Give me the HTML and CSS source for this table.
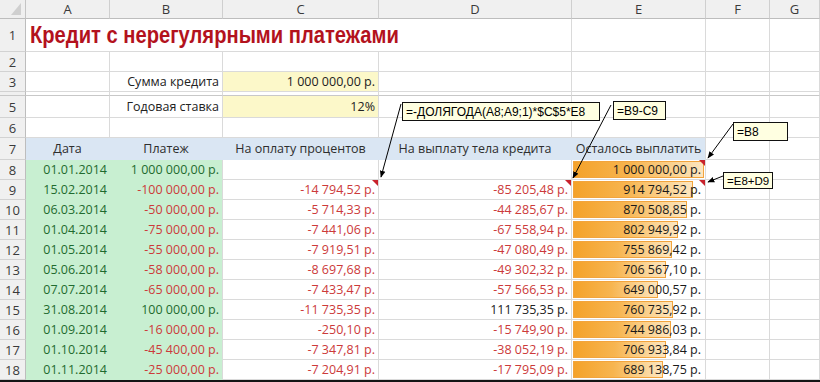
FILE: index.html
```html
<!DOCTYPE html>
<html lang="ru">
<head>
<meta charset="utf-8">
<title>Кредит с нерегулярными платежами</title>
<link rel="stylesheet" href="styles.css">
</head>
<body>
<div class="sheet">
  <div class="c corner"><svg width="10" height="12" viewBox="0 0 10 12"><polygon points="10,0 10,12 0,12" fill="#cfcfcf"/></svg></div>
  <div class="c ch">A</div><div class="c ch">B</div><div class="c ch">C</div><div class="c ch">D</div><div class="c ch">E</div><div class="c ch">F</div><div class="c ch">G</div>

  <div class="c rh">1</div>
  <div class="c title"><span class="title-text">Кредит с нерегулярными платежами</span></div>
  <div class="c"></div><div class="c"></div><div class="c"></div>

  <div class="c rh">2</div>
  <div class="c"></div><div class="c"></div><div class="c"></div><div class="c"></div><div class="c"></div><div class="c"></div><div class="c"></div>

  <div class="c rh">3</div>
  <div class="c"></div><div class="c r">Сумма кредита</div><div class="c r yel">1 000 000,00 р.</div><div class="c"></div><div class="c"></div><div class="c"></div><div class="c"></div>

  <div class="c rh thin"></div>
  <div class="c thin"></div><div class="c thin"></div><div class="c thin"></div><div class="c thin"></div><div class="c thin"></div><div class="c thin"></div><div class="c thin"></div>

  <div class="c rh">5</div>
  <div class="c"></div><div class="c r">Годовая ставка</div><div class="c r yel">12%</div><div class="c"></div><div class="c"></div><div class="c"></div><div class="c"></div>

  <div class="c rh">6</div>
  <div class="c"></div><div class="c"></div><div class="c"></div><div class="c"></div><div class="c"></div><div class="c"></div><div class="c"></div>

  <div class="c rh">7</div>
  <div class="c th">Дата</div><div class="c th">Платеж</div><div class="c th">На оплату процентов</div><div class="c th">На выплату тела кредита</div><div class="c th last">Осталось выплатить</div><div class="c"></div><div class="c"></div>

  <div class="c rh">8</div>
  <div class="c gr ga r date">01.01.2014</div><div class="c gr r pos">1 000 000,00 р.</div><div class="c r"></div><div class="c r"></div>
  <div class="c e note"><span class="bar" style="width:131px"></span><span class="v">1 000 000,00 р.</span></div><div class="c"></div><div class="c"></div>

  <div class="c rh">9</div>
  <div class="c gr ga r date">15.02.2014</div><div class="c gr r neg">-100 000,00 р.</div><div class="c r neg note">-14 794,52 р.</div><div class="c r neg note">-85 205,48 р.</div>
  <div class="c e note"><span class="bar" style="width:119.8px"></span><span class="v">914 794,52 р.</span></div><div class="c"></div><div class="c"></div>

  <div class="c rh">10</div>
  <div class="c gr ga r date">06.03.2014</div><div class="c gr r neg">-50 000,00 р.</div><div class="c r neg">-5 714,33 р.</div><div class="c r neg">-44 285,67 р.</div>
  <div class="c e"><span class="bar" style="width:114px"></span><span class="v">870 508,85 р.</span></div><div class="c"></div><div class="c"></div>

  <div class="c rh">11</div>
  <div class="c gr ga r date">01.04.2014</div><div class="c gr r neg">-75 000,00 р.</div><div class="c r neg">-7 441,06 р.</div><div class="c r neg">-67 558,94 р.</div>
  <div class="c e"><span class="bar" style="width:105.2px"></span><span class="v">802 949,92 р.</span></div><div class="c"></div><div class="c"></div>

  <div class="c rh">12</div>
  <div class="c gr ga r date">01.05.2014</div><div class="c gr r neg">-55 000,00 р.</div><div class="c r neg">-7 919,51 р.</div><div class="c r neg">-47 080,49 р.</div>
  <div class="c e"><span class="bar" style="width:99px"></span><span class="v">755 869,42 р.</span></div><div class="c"></div><div class="c"></div>

  <div class="c rh">13</div>
  <div class="c gr ga r date">05.06.2014</div><div class="c gr r neg">-58 000,00 р.</div><div class="c r neg">-8 697,68 р.</div><div class="c r neg">-49 302,32 р.</div>
  <div class="c e"><span class="bar" style="width:92.6px"></span><span class="v">706 567,10 р.</span></div><div class="c"></div><div class="c"></div>

  <div class="c rh">14</div>
  <div class="c gr ga r date">07.07.2014</div><div class="c gr r neg">-65 000,00 р.</div><div class="c r neg">-7 433,47 р.</div><div class="c r neg">-57 566,53 р.</div>
  <div class="c e"><span class="bar" style="width:85px"></span><span class="v">649 000,57 р.</span></div><div class="c"></div><div class="c"></div>

  <div class="c rh">15</div>
  <div class="c gr ga r date">31.08.2014</div><div class="c gr r pos">100 000,00 р.</div><div class="c r neg">-11 735,35 р.</div><div class="c r">111 735,35 р.</div>
  <div class="c e"><span class="bar" style="width:99.7px"></span><span class="v">760 735,92 р.</span></div><div class="c"></div><div class="c"></div>

  <div class="c rh">16</div>
  <div class="c gr ga r date">01.09.2014</div><div class="c gr r neg">-16 000,00 р.</div><div class="c r neg">-250,10 р.</div><div class="c r neg">-15 749,90 р.</div>
  <div class="c e"><span class="bar" style="width:97.6px"></span><span class="v">744 986,03 р.</span></div><div class="c"></div><div class="c"></div>

  <div class="c rh">17</div>
  <div class="c gr ga r date">01.10.2014</div><div class="c gr r neg">-45 400,00 р.</div><div class="c r neg">-7 347,81 р.</div><div class="c r neg">-38 052,19 р.</div>
  <div class="c e"><span class="bar" style="width:92.6px"></span><span class="v">706 933,84 р.</span></div><div class="c"></div><div class="c"></div>

  <div class="c rh">18</div>
  <div class="c gr ga r date">01.11.2014</div><div class="c gr r neg">-25 000,00 р.</div><div class="c r neg">-7 204,91 р.</div><div class="c r neg">-17 795,09 р.</div>
  <div class="c e"><span class="bar" style="width:90.3px"></span><span class="v">689 138,75 р.</span></div><div class="c"></div><div class="c"></div>

  <svg class="arrows" width="820" height="382" viewBox="0 0 820 382">
    <defs>
      <marker id="ah" viewBox="0 0 10 10" refX="9" refY="5" markerWidth="7" markerHeight="7" orient="auto">
        <path d="M0,1 L10,5 L0,9 z" fill="#000"/>
      </marker>
    </defs>
    <line x1="401" y1="104" x2="381" y2="177" stroke="#000" stroke-width="1" marker-end="url(#ah)"/>
    <line x1="611" y1="105" x2="573" y2="178" stroke="#000" stroke-width="1" marker-end="url(#ah)"/>
    <line x1="733" y1="124" x2="708" y2="158" stroke="#000" stroke-width="1" marker-end="url(#ah)"/>
    <line x1="723" y1="176" x2="708" y2="182" stroke="#000" stroke-width="1" marker-end="url(#ah)"/>
  </svg>
  <div class="cm cm1">=-ДОЛЯГОДА(A8;A9;1)*$C$5*E8</div>
  <div class="cm cm2">=B9-C9</div>
  <div class="cm cm3">=B8</div>
  <div class="cm cm4">=E8+D9</div>
</div>
</body>
</html>
```

FILE: styles.css
```css
html, body {
  margin: 0;
  padding: 0;
  background: #ffffff;
}

.sheet {
  position: relative;
  width: 820px;
  display: grid;
  grid-template-columns: 26px 84px 113px 156px 193px 134px 64px 50px;
  grid-template-rows: 19px 33px 20px 20px 4px 22px 20px 22px repeat(11, 20px);
  border-bottom: 2px solid #141414;
  font-family: "Open Sans", "DejaVu Sans", sans-serif;
  font-size: 12.5px;
  color: #222222;
}

.c {
  box-sizing: border-box;
  position: relative;
  display: flex;
  align-items: center;
  min-width: 0;
  padding: 0 3px;
  white-space: nowrap;
  border-right: 1px solid #dadada;
  border-bottom: 1px solid #dadada;
}

.corner {
  background: #efefef;
  justify-content: flex-end;
  align-items: flex-end;
  padding: 0 4px 3px 0;
  border-right-color: #c4c4c4;
  border-bottom-color: #bdbdbd;
}

.ch {
  background: #f0f0f0;
  justify-content: center;
  color: #3a3a3a;
  font-size: 13px;
  border-right-color: #cfcfcf;
  border-bottom-color: #bdbdbd;
}

.rh {
  background: #f0f0f0;
  justify-content: center;
  padding: 0;
  color: #3a3a3a;
  font-size: 13px;
  border-right-color: #bdbdbd;
  border-bottom-color: #d2d2d2;
}

.thin {
  border-bottom: 1px solid #c8c8c8;
}

.r {
  justify-content: flex-end;
}

.ctr {
  justify-content: center;
}

.title {
  grid-column: span 4;
  padding-left: 4px;
  color: #b3121d;
}

.title-text {
  display: inline-block;
  font-family: "Liberation Sans", Arial, sans-serif;
  font-weight: bold;
  font-size: 24px;
  transform: scaleX(0.84);
  transform-origin: left center;
}

.yel {
  background: #fcf8c9;
}

.th {
  background: #dae6f3;
  justify-content: center;
  color: #2e2e2e;
  border-right-color: transparent;
  border-bottom-color: transparent;
}

.th.last {
  border-right-color: #dadada;
}

.gr {
  background: #c8efd1;
  border-bottom-color: transparent;
}

.gr.ga {
  border-right-color: transparent;
}

.date {
  color: #1f6b2f;
  padding-right: 2px;
}

.pos {
  color: #1f6b2f;
}

.neg {
  color: #cc3a3a;
}

.e {
  justify-content: flex-end;
  padding-right: 4px;
  color: #1a1a1a;
}

.bar {
  position: absolute;
  left: 1px;
  top: 1px;
  height: 17px;
  box-sizing: border-box;
  border: 1px solid #f2a43c;
  background: linear-gradient(90deg, #f4a22a 0%, #f7b550 45%, #fbd597 80%, #fde6c0 100%);
}

.v {
  position: relative;
}

.note::after {
  content: "";
  position: absolute;
  top: 0;
  right: 0;
  border-top: 6px solid #c8222c;
  border-left: 6px solid transparent;
}

.arrows {
  position: absolute;
  left: 0;
  top: 0;
  pointer-events: none;
}

.cm {
  position: absolute;
  box-sizing: border-box;
  display: flex;
  align-items: center;
  padding: 0 2px 0 3px;
  background: #ffffe1;
  border: 1px solid #111111;
  color: #000000;
  font-family: "Liberation Sans", Arial, sans-serif;
  font-size: 12px;
  white-space: nowrap;
  overflow: hidden;
}

.cm1 { left: 402px; top: 102px; width: 198px; height: 19px; }
.cm2 { left: 613px; top: 101px; width: 53px; height: 19px; }
.cm3 { left: 733px; top: 122px; width: 55px; height: 19px; }
.cm4 { left: 723px; top: 172px; width: 50px; height: 17px; font-size: 11.5px; }
```
